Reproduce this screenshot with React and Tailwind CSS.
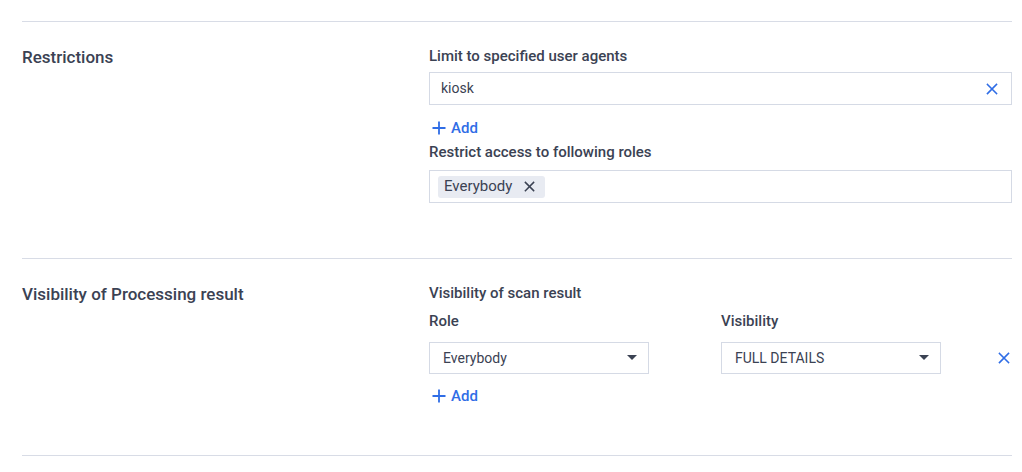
import React from "react";

const XIcon = ({ className = "", size = 12 }) => (
  <svg width={size} height={size} viewBox="0 0 12 12" className={className} fill="none">
    <path d="M1.5 1.5L10.5 10.5M10.5 1.5L1.5 10.5" stroke="currentColor" strokeWidth="1.6" strokeLinecap="square" />
  </svg>
);

const Plus = () => (
  <svg width="14" height="14" viewBox="0 0 14 14" fill="none">
    <path d="M7 0.5V13.5M0.5 7H13.5" stroke="currentColor" strokeWidth="1.8" />
  </svg>
);

const Caret = () => (
  <svg width="10" height="6" viewBox="0 0 10 6">
    <path d="M0 0H10L5 5Z" fill="#3b4253" />
  </svg>
);

const AddLink = ({ className = "" }) => (
  <div className={`flex items-center gap-[5px] pl-[3px] text-[#2f6de6] text-[15px] leading-[20px] font-medium h-[20px] ${className}`}>
    <Plus />
    <span>Add</span>
  </div>
);

const Select = ({ value }) => (
  <div className="w-[220px] shrink-0 h-[32px] border border-[#d5dae5] flex items-center justify-between pl-[13px] pr-[11px] text-[14px] text-[#3b4253]">
    <span>{value}</span>
    <Caret />
  </div>
);

export default function App() {
  return (
    <div
      className="bg-white w-[1022px] h-[472px] pl-[22px] pr-[10px] pt-[21px] text-[#3b4253]"
      style={{ fontFamily: "Roboto, 'Liberation Sans', sans-serif" }}
    >
      <section className="border-t border-[#d8dce6] flex pt-[24px] pb-[55px]">
        <div className="w-[407px] shrink-0 text-[17px] leading-[22px] font-medium">Restrictions</div>
        <div className="flex-1 min-w-0 flex flex-col">
          <div className="text-[15px] leading-[20px] font-medium">Limit to specified user agents</div>
          <div className="mt-[6px] h-[33px] border border-[#d5dae5] flex items-center justify-between pl-[11px] pr-[13px] text-[14px]">
            <span>kiosk</span>
            <XIcon className="text-[#2f6de6]" size={12} />
          </div>
          <AddLink className="mt-[13px]" />
          <div className="mt-[4px] text-[15px] leading-[20px] font-medium">Restrict access to following roles</div>
          <div className="mt-[8px] h-[33px] border border-[#d5dae5] flex items-center pl-[8px]">
            <div className="h-[22px] bg-[#e8ebf2] rounded-[3px] flex items-center pl-[6px] pr-[10px] gap-[12px] text-[15px]">
              <span>Everybody</span>
              <XIcon className="text-[#3b4253]" size={11} />
            </div>
          </div>
        </div>
      </section>
      <section className="border-t border-[#d8dce6] flex pt-[24px] pb-[49px]">
        <div className="w-[407px] shrink-0 text-[17px] leading-[22px] font-medium">Visibility of Processing result</div>
        <div className="flex-1 min-w-0 flex flex-col">
          <div className="text-[15px] leading-[20px] font-medium">Visibility of scan result</div>
          <div className="mt-[8px] flex gap-[72px] text-[15px] leading-[20px] font-medium">
            <div className="w-[220px]">Role</div>
            <div className="w-[220px]">Visibility</div>
          </div>
          <div className="mt-[11px] flex items-center">
            <div className="flex gap-[72px]">
              <Select value="Everybody" />
              <Select value="FULL DETAILS" />
            </div>
            <div className="ml-auto pr-[2px]">
              <XIcon className="text-[#2f6de6]" size={12} />
            </div>
          </div>
          <AddLink className="mt-[12px]" />
        </div>
      </section>
      <div className="border-t border-[#d8dce6]" />
    </div>
  );
}
